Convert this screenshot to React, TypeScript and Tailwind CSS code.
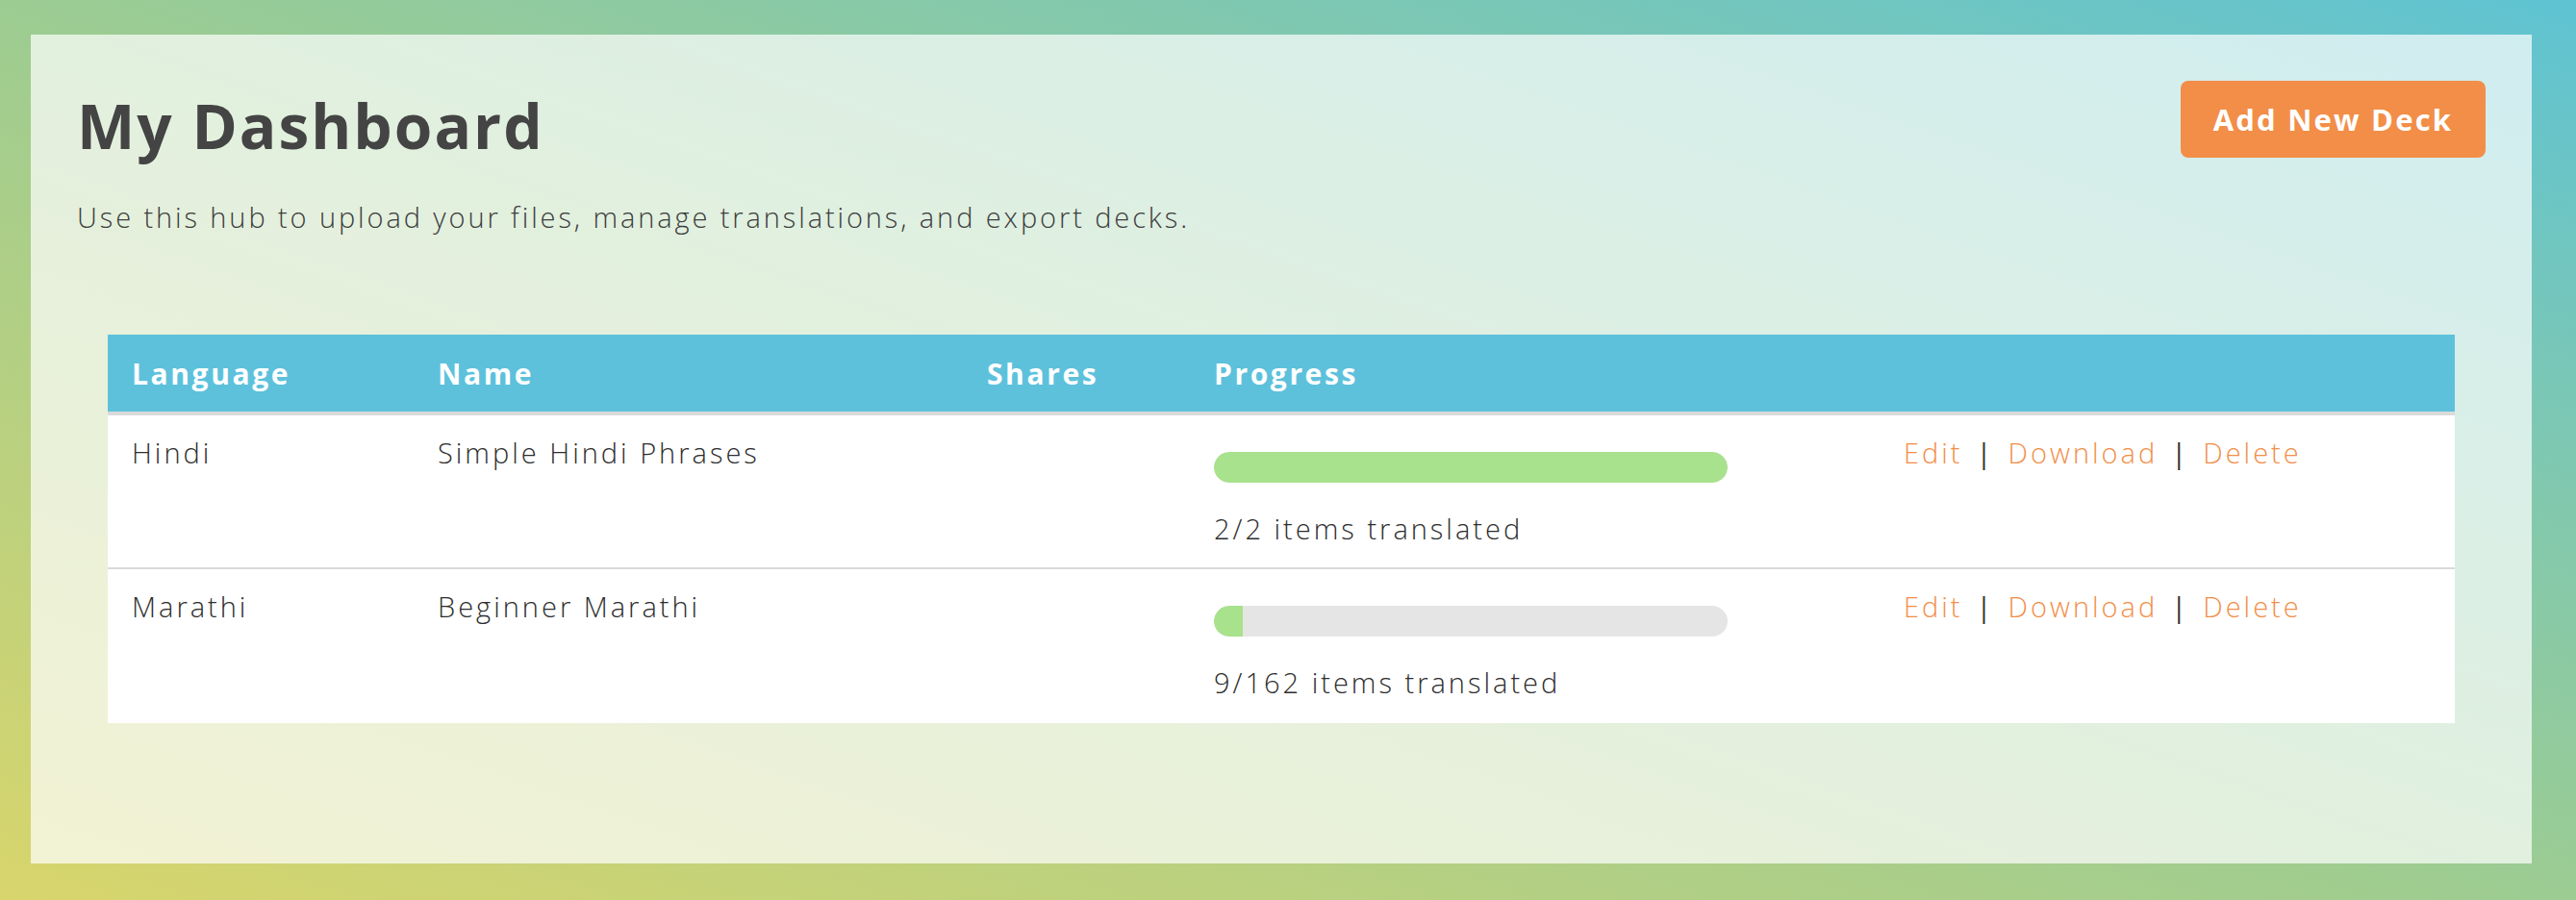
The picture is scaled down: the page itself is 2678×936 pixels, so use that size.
const decks = [
  { language: 'Hindi', name: 'Simple Hindi Phrases', done: 2, total: 2 },
  { language: 'Marathi', name: 'Beginner Marathi', done: 9, total: 162 },
];

const cols = 'grid grid-cols-[318px_571px_236px_717px_1fr]';

const App = () => {
  return (
    <div
      className="w-[2678px] h-[936px] bg-[linear-gradient(to_top_right,#d8d56c_0%,#9ccc92_50%,#5fc3d2_100%)] pt-[36px] pl-[32px] pr-[46px] pb-[38px]"
      style={{ fontFamily: '"Open Sans", "Liberation Sans", sans-serif' }}
    >
      <div className="h-full bg-white/70 px-[48px] pt-[48px]">
        <div className="flex items-start justify-between">
          <div>
            <h1 className="text-[64px] leading-[72px] font-bold text-[#444] pt-[11px] tracking-[2px]">My Dashboard</h1>
            <p className="mt-[39px] text-[29px] leading-[40px] font-light text-[#3d3d3d] tracking-[2.9px]">
              Use this hub to upload your files, manage translations, and export decks.
            </p>
          </div>
          <button className="h-[80px] w-[317px] rounded-[8px] bg-[#f28e48] text-white text-[31px] font-bold tracking-[2.2px]">
            Add New Deck
          </button>
        </div>

        <div className="mt-[102px] mx-[32px] bg-white">
          <div className={`${cols} h-[80px] items-center bg-[#5dc1dc] border-b-[4px] border-[#dadada] box-content text-white text-[30px] font-bold tracking-[2.6px]`}>
            <div className="pl-[25px]">Language</div>
            <div className="pl-[25px]">Name</div>
            <div className="pl-[25px]">Shares</div>
            <div className="pl-[25px]">Progress</div>
            <div />
          </div>
          {decks.map((d, i) => (
            <div
              key={d.name}
              className={`${cols} h-[160px] text-[29px] leading-[42px] font-light text-[#2e2e2e] tracking-[3px] ${i === 0 ? 'border-b-[2px] border-[#dadada]' : ''}`}
            >
              <div className="pl-[25px] pt-[18px]">{d.language}</div>
              <div className="pl-[25px] pt-[18px]">{d.name}</div>
              <div className="pl-[25px] pt-[18px]" />
              <div className="pl-[25px] pt-[38px]">
                <div className="w-[534px] h-[32px] rounded-full bg-[#e5e5e5] overflow-hidden">
                  <div
                    className={`h-full bg-[#a8e28c] ${d.done === d.total ? 'rounded-full' : 'rounded-l-full'}`}
                    style={{ width: `${(d.done / d.total) * 100}%` }}
                  />
                </div>
                <div className="mt-[27px]">
                  {d.done}/{d.total} items translated
                </div>
              </div>
              <div className="pl-[25px] pt-[18px] flex gap-[14px]">
                <a className="text-[#f28e48]">Edit</a>
                <span className="text-[#333] font-normal">|</span>
                <a className="text-[#f28e48]">Download</a>
                <span className="text-[#333] font-normal">|</span>
                <a className="text-[#f28e48]">Delete</a>
              </div>
            </div>
          ))}
        </div>
      </div>
    </div>
  );
};

export default App;
